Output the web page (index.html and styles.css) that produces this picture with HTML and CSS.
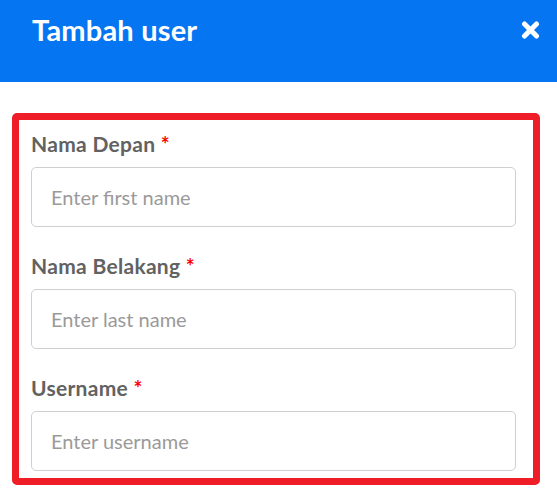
FILE: index.html
```html
<!DOCTYPE html>
<html lang="id">
<head>
<meta charset="utf-8">
<title>Tambah user</title>
<link rel="stylesheet" href="styles.css">
</head>
<body>
<div class="modal">
  <header class="modal-header">
    <h1 class="modal-title">Tambah user</h1>
    <button class="close-btn" type="button" aria-label="Close">
      <svg width="19" height="18" viewBox="0 0 19 18" aria-hidden="true">
        <path d="M3.5 3 L15.5 15 M15.5 3 L3.5 15" stroke="#fff" stroke-width="5" stroke-linecap="round"/>
      </svg>
    </button>
  </header>
  <div class="modal-body">
    <form class="form-box">
      <div class="form-group">
        <label class="form-label" for="fn">Nama Depan <span class="req">*</span></label>
        <input class="form-input" id="fn" type="text" placeholder="Enter first name">
      </div>
      <div class="form-group">
        <label class="form-label" for="ln">Nama Belakang <span class="req">*</span></label>
        <input class="form-input" id="ln" type="text" placeholder="Enter last name">
      </div>
      <div class="form-group">
        <label class="form-label" for="un">Username <span class="req">*</span></label>
        <input class="form-input" id="un" type="text" placeholder="Enter username">
      </div>
    </form>
  </div>
</div>
</body>
</html>
```
FILE: styles.css
```css
* { box-sizing: border-box; }
html, body { margin: 0; padding: 0; background: #fff; }
body { font-family: Lato, "Open Sans", sans-serif; }

.modal-header {
  height: 82px;
  background: #0575f2;
  display: flex;
  justify-content: space-between;
  align-items: flex-start;
  padding: 12px 17px 0 32px;
}
.modal-title {
  margin: 0;
  color: #fff;
  font-size: 29px;
  line-height: 35px;
  font-weight: 700;
  letter-spacing: 0.2px;
}
.close-btn {
  margin-top: 9px;
  padding: 0;
  border: 0;
  background: none;
  width: 19px;
  height: 18px;
  display: block;
}
.close-btn svg { display: block; }

.modal-body {
  padding: 31px 17px 0 12px;
}
.form-box {
  margin: 0;
  border: 7px solid #ee1d27;
  border-radius: 5px;
  padding: 12px 17px 7px 12px;
}
.form-group { margin-bottom: 27px; }
.form-group:last-child { margin-bottom: 0; }
.form-label {
  display: block;
  font-size: 21px;
  line-height: 24px;
  font-weight: 700;
  color: #626262;
  letter-spacing: 0.3px;
  margin-bottom: 11px;
}
.req { color: #f00; }
.form-input {
  display: block;
  width: 100%;
  height: 60px;
  margin: 0;
  border: 1px solid #cfcfcf;
  border-radius: 5px;
  padding: 0 19px;
  font-family: Lato, "Open Sans", sans-serif;
  font-size: 20px;
  color: #333;
  background: #fff;
}
.form-input::placeholder { color: #9a9a9a; opacity: 1; }
```
